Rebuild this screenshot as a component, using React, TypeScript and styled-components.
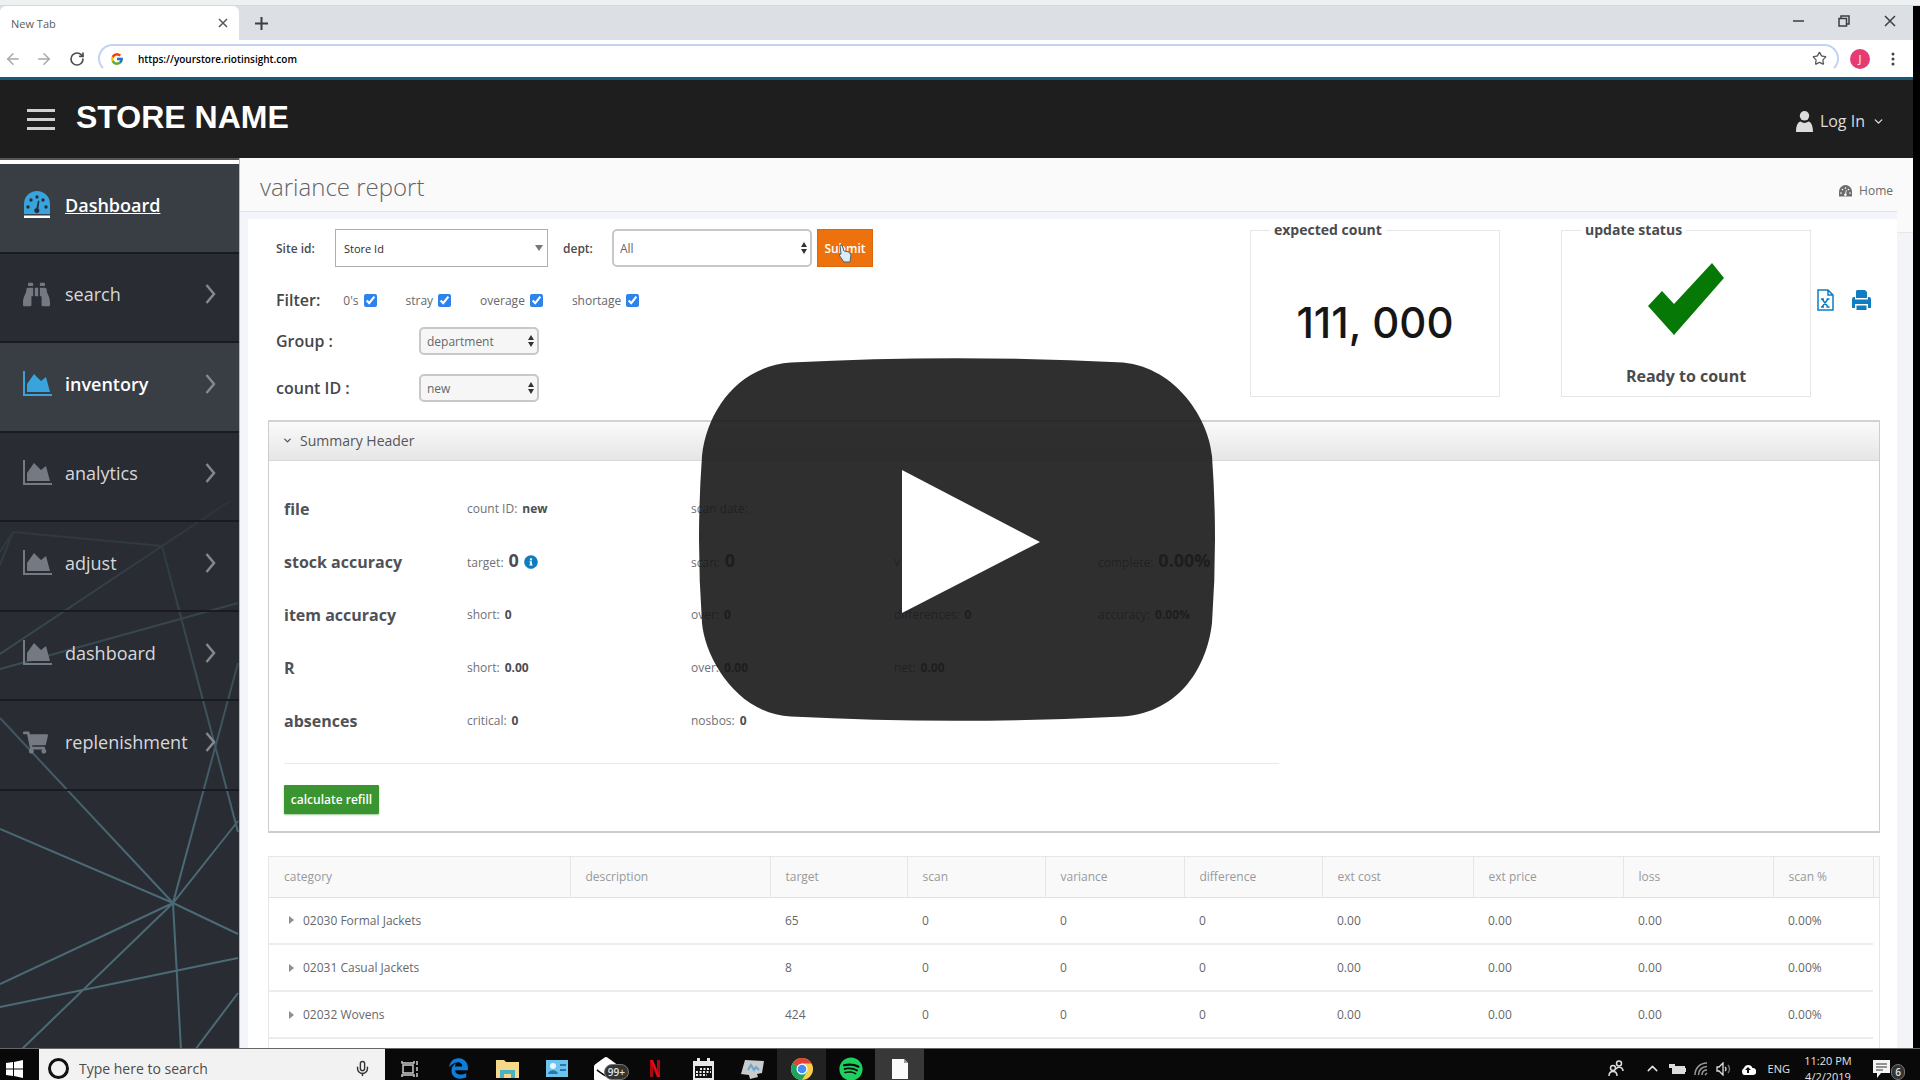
import React from 'react';
import styled, { createGlobalStyle } from 'styled-components';
import {
  FaBinoculars,
  FaShoppingCart,
  FaInfoCircle,
  FaEdgeLegacy,
  FaSpotify,
  FaEnvelopeOpen,
} from 'react-icons/fa';
import { FcGoogle } from 'react-icons/fc';
import { ArrowLeft, ArrowRight, RotateCw, Star, Mic, ChevronUp, ChevronDown } from 'lucide-react';

const GlobalStyle = createGlobalStyle`
  * { box-sizing: border-box; }
  body { margin: 0; background: #000; font-family: 'Open Sans', 'Noto Sans', sans-serif; color: #4a4b4f; }
  button, input, select { font-family: inherit; }
  button { border: 0; padding: 0; background: none; color: inherit; cursor: pointer; }
  svg { display: block; flex: none; }
`;

const Page = styled.div`
  height: 100vh;
  display: flex;
  flex-direction: column;
  overflow: hidden;
`;
const TopEdge = styled.div`
  flex: none;
  height: 6px;
  background: #edf1f1;
  border-bottom: 1px solid #d3dadc;
`;
const Window = styled.div`
  position: relative;
  flex: 1;
  min-height: 0;
  margin-right: 7px;
  display: flex;
  flex-direction: column;
  background: #fff;
`;

/* ---- browser chrome ---- */
const TabStrip = styled.div`
  flex: none;
  height: 34px;
  display: flex;
  align-items: stretch;
  background: #dcdfe4;
`;
const Tab = styled.div`
  width: 239px;
  padding: 0 11px;
  display: flex;
  align-items: center;
  justify-content: space-between;
  background: #fff;
  border-radius: 6px 6px 0 0;
  font-size: 11px;
  color: #5a5c60;
`;
const IconButton = styled.button<{ $w: number }>`
  width: ${(p) => p.$w}px;
  display: flex;
  align-items: center;
  justify-content: center;
  color: #3c3e42;
`;
const WindowButtons = styled.div`
  margin-left: auto;
  display: flex;
  height: 30px;
`;
const AddressRow = styled.div`
  flex: none;
  height: 37px;
  padding-right: 8px;
  display: flex;
  align-items: center;
  background: #fff;
`;
const NavButtons = styled.div`
  width: 98px;
  display: flex;
`;
const AddressBar = styled.label`
  flex: 1;
  height: 29px;
  padding: 0 10px;
  display: flex;
  align-items: center;
  gap: 14px;
  border: 2px solid #c3d3f0;
  border-bottom-color: transparent;
  border-radius: 15px;
`;
const UrlInput = styled.input`
  flex: 1;
  border: 0;
  padding: 0;
  outline: 0;
  background: transparent;
  font-size: 10px;
  font-weight: 600;
  color: #000;
`;
const Avatar = styled.button`
  width: 20px;
  height: 20px;
  margin: 0 11px;
  border-radius: 50%;
  background: #e63a72;
  color: #fff;
  font-size: 11px;
`;

/* ---- site header ---- */
const SiteHeader = styled.header`
  flex: none;
  height: 81px;
  padding: 0 28px 0 27px;
  display: flex;
  align-items: center;
  background: #1e1e1e;
  border-top: 3px solid #17597a;
`;
const Bars = styled.button`
  width: 28px;
  height: 21px;
  display: flex;
  flex-direction: column;
  justify-content: space-between;
  span { display: block; height: 3px; background: #d0d0d0; }
`;
const StoreName = styled.h1`
  margin: 0 auto 4px 21px;
  font: 700 32px/40px 'Liberation Sans', Arial, sans-serif;
  color: #fff;
`;
const Login = styled.button`
  padding-top: 4px;
  display: flex;
  align-items: center;
  gap: 7px;
  color: #dcdcdc;
  font-size: 16px;
  font-weight: 500;
`;

/* ---- body ---- */
const Body = styled.div`
  flex: 1;
  min-height: 0;
  display: flex;
`;
const Sidebar = styled.nav`
  position: relative;
  flex: none;
  width: 240px;
  background: #292c33;
  border-right: 1px solid #b9bcc3;
  overflow: hidden;
`;
const SidebarEdge = styled.div`
  height: 6px;
  background: #fff;
  border-top: 2px solid #555;
`;
const Network = styled.svg`
  position: absolute;
  left: 0;
  top: 322px;
`;
const Menu = styled.ul`
  position: relative;
  margin: 0;
  padding: 0;
  height: 627px;
  display: grid;
  grid-auto-rows: 1fr;
  list-style: none;
`;
const MenuItem = styled.li<{ $active?: boolean }>`
  border-bottom: 2px solid #1a1b20;
  background: ${(p) => (p.$active ? '#383e44' : 'transparent')};
`;
const MenuLink = styled.a<{ $active?: boolean; $underline?: boolean }>`
  height: 100%;
  padding: 0 23px 6px 23px;
  display: grid;
  grid-template-columns: 42px 1fr auto;
  align-items: center;
  font-size: 18px;
  font-weight: ${(p) => (p.$active ? 600 : 400)};
  color: ${(p) => (p.$active ? '#fff' : '#d6d8db')};
  text-decoration: ${(p) => (p.$underline ? 'underline' : 'none')};
  svg { color: ${(p) => (p.$active ? '#38a3dc' : '#757981')}; }
  svg:last-child:not(:first-child) { color: #85888d; }
`;
const Main = styled.main`
  flex: 1;
  min-width: 0;
  display: flex;
  flex-direction: column;
  background: #f3f5fa;
`;
const TitleBar = styled.div`
  flex: none;
  height: 54px;
  padding: 4px 4px 0 20px;
  display: flex;
  align-items: center;
  justify-content: space-between;
  background: #fafafa;
  border-bottom: 1px solid #e2e3e6;
`;
const Title = styled.h2`
  margin: 0;
  font-size: 24px;
  font-weight: 300;
  color: #636468;
`;
const HomeLink = styled.a`
  display: flex;
  align-items: center;
  gap: 7px;
  padding-top: 8px;
  font-size: 12px;
  color: #6a6b6e;
  text-decoration: none;
`;
const Content = styled.div`
  flex: 1;
  min-height: 0;
  margin: 7px 0 0 8px;
  padding: 0 17px 0 20px;
  display: flex;
  flex-direction: column;
  background: #fff;
  overflow: hidden;
`;
const ScrollTrack = styled.div`
  flex: none;
  width: 16px;
  display: flex;
  flex-direction: column;
  background: #f3f4f8;
`;
const ScrollCap = styled.div`
  height: 75px;
  background: #fafafa;
  border-bottom: 1px solid #e6e7ec;
`;

/* ---- filters ---- */
const Controls = styled.section`
  flex: none;
  height: 201px;
  display: flex;
  justify-content: space-between;
`;
const Filters = styled.form`
  padding: 10px 0 0 8px;
`;
const FilterLine = styled.div`
  height: 38px;
  display: flex;
  align-items: center;
`;
const CheckLine = styled.div`
  height: 60px;
  padding-top: 6px;
  display: flex;
  align-items: center;
  gap: 29px;
`;
const PickLine = styled.div`
  height: 28px;
  margin-bottom: 19px;
  display: grid;
  grid-template-columns: 143px 120px;
  align-items: center;
`;
const SmallLabel = styled.label`
  width: 59px;
  font-size: 12px;
  font-weight: 600;
`;
const DeptLabel = styled(SmallLabel)`
  width: 49px;
  margin-left: 15px;
`;
const BigLabel = styled.label`
  font-size: 16px;
  font-weight: 600;
  color: #45464a;
`;
const SelectBox = styled.span<{ $w?: number }>`
  position: relative;
  width: ${(p) => (p.$w ? `${p.$w}px` : '100%')};
  svg { position: absolute; right: 5px; top: 50%; transform: translateY(-50%); pointer-events: none; }
`;
const Select = styled.select<{ $square?: boolean; $small?: boolean }>`
  appearance: none;
  width: 100%;
  height: ${(p) => (p.$small ? 28 : 38)}px;
  padding: 0 ${(p) => (p.$square ? 8 : 6)}px;
  border: ${(p) => (p.$square ? 1 : 2)}px solid ${(p) => (p.$square ? '#aeaeae' : '#c8c8c8')};
  border-radius: ${(p) => (p.$square ? 0 : 5)}px;
  background: ${(p) => (p.$small ? '#f6f6f6' : '#fff')};
  font-size: ${(p) => (p.$square ? 11 : 12)}px;
  color: ${(p) => (p.$square ? '#2c2c2c' : '#66676b')};
  display: block;
`;
const Submit = styled.button`
  position: relative;
  width: 56px;
  height: 38px;
  margin-left: 5px;
  background: #ed720e;
  border: 1px solid #d9690f;
  color: #fff;
  font-size: 12px;
  font-weight: 600;
`;
const Cursor = styled.svg`
  position: absolute;
  left: 20px;
  top: 14px;
`;
const Check = styled.label`
  display: flex;
  align-items: center;
  gap: 5px;
  font-size: 12px;
  color: #66676b;
  input { width: 13px; height: 13px; margin: 0; accent-color: #2f82ea; }
`;
const FilterName = styled.span`
  margin-right: -6px;
  font-size: 16px;
  font-weight: 600;
  color: #45464a;
`;

/* ---- widgets ---- */
const Widgets = styled.div`
  display: flex;
  align-items: flex-start;
`;
const Card = styled.fieldset`
  width: 250px;
  margin: 0 61px 0 0;
  padding: 0 19px;
  border: 1px solid #e6e6e6;
`;
const Legend = styled.legend`
  padding: 0 4px;
  background: #fff;
  font-size: 14px;
  line-height: 22px;
  font-weight: 700;
`;
const CardBody = styled.div<{ $drop: number }>`
  height: 155px;
  padding-top: ${(p) => p.$drop}px;
  display: flex;
  flex-direction: column;
  align-items: center;
  justify-content: center;
`;
const Count = styled.strong`
  font: 500 42px/52px Inter, 'Open Sans', sans-serif;
  color: #161616;
`;
const Ready = styled.strong`
  margin-top: 28px;
  font-size: 16px;
  line-height: 26px;
  font-weight: 700;
`;
const Exports = styled.div`
  display: flex;
  align-items: center;
  gap: 18px;
  margin: 70px 9px 0 -55px;
  color: #0f7ec1;
`;

/* ---- summary ---- */
const Summary = styled.section`
  flex: none;
  border: 1px solid #cdcdcd;
  border-top: 2px solid #d2d2d2;
  border-bottom: 2px solid #cdcdcd;
`;
const SummaryHead = styled.button`
  width: 100%;
  height: 39px;
  padding: 0 0 2px 13px;
  display: flex;
  align-items: center;
  gap: 7px;
  background: linear-gradient(#fafafa, #e6e6e6);
  border-bottom: 1px solid #d9d9d9;
  font-size: 14px;
  color: #55565a;
`;
const SummaryBody = styled.div`
  padding: 21px 15px 17px;
`;
const Line = styled.div`
  height: 53px;
  display: grid;
  grid-template-columns: 183px 224px 203px 204px 1fr;
  align-items: center;
`;
const LineName = styled.h3`
  margin: 0;
  font-size: 16px;
  font-weight: 700;
  color: #505156;
`;
const Stat = styled.span<{ $big?: boolean }>`
  display: flex;
  align-items: baseline;
  gap: 5px;
  font-size: 12px;
  line-height: 20px;
  color: #707175;
  b { color: #4c4d52; font-size: ${(p) => (p.$big ? 18 : 12)}px; }
  svg { color: #0f7ec1; align-self: center; }
`;
const Rule = styled.hr`
  width: 63%;
  margin: 16px 0 21px;
  border: 0;
  border-top: 1px solid #e9e9e9;
`;
const Refill = styled.button`
  width: 95px;
  height: 29px;
  background: #3a9430;
  border-radius: 1px;
  box-shadow: 0 1px 2px #9cc898;
  color: #fff;
  font-size: 12px;
  font-weight: 600;
`;

/* ---- data table ---- */
const TableWrap = styled.div`
  flex: 1;
  min-height: 0;
  margin-top: 23px;
  overflow: hidden;
  border: 1px solid #e6e6e6;
  border-bottom: 0;
`;
const Table = styled.table`
  width: 100%;
  table-layout: fixed;
  border-collapse: collapse;
  font-size: 12px;
`;
const Th = styled.th`
  height: 40px;
  padding: 0 0 0 15px;
  background: #f9f9f9;
  border-right: 1px solid #e6e6e6;
  border-bottom: 1px solid #e2e2e2;
  text-align: left;
  font-weight: 400;
  color: #98999c;
  &:last-child { border-right: 0; padding: 0; }
`;
const Td = styled.td`
  height: 47px;
  padding: 0 0 0 15px;
  border-bottom: 2px solid #ececec;
  color: #66676a;
  &:last-child { border-bottom: 0; padding: 0; }
`;
const Expand = styled.button`
  display: flex;
  align-items: center;
  gap: 9px;
  padding-left: 5px;
  font-size: 12px;
`;

/* ---- video overlay ---- */
const Play = styled.button`
  position: absolute;
  left: 50%;
  top: 352px;
  transform: translateX(-50%);
`;

/* ---- taskbar ---- */
const Taskbar = styled.footer`
  flex: none;
  height: 32px;
  overflow: hidden;
  background: #090909;
  border-top: 1px solid #666;
  color: #e2e2e2;
`;
const TaskRow = styled.div`
  height: 39px;
  display: flex;
  align-items: center;
`;
const Start = styled.button`
  width: 39px;
  padding-left: 6px;
`;
const TaskSearch = styled.label`
  width: 346px;
  height: 39px;
  padding: 0 14px 0 9px;
  display: flex;
  align-items: center;
  gap: 10px;
  background: #f2f2f2;
  color: #333;
  input { flex: 1; min-width: 0; border: 0; padding: 0; background: none; font-size: 14px; }
  input::placeholder { color: #4c4c4c; opacity: 1; }
`;
const Ring = styled.span`
  width: 21px;
  height: 21px;
  border: 3px solid #111;
  border-radius: 50%;
`;
const TaskApp = styled.button<{ $bg?: string }>`
  position: relative;
  width: 49px;
  height: 39px;
  display: flex;
  align-items: center;
  justify-content: center;
  background: ${(p) => p.$bg ?? 'transparent'};
`;
const Badge = styled.span`
  position: absolute;
  right: 1px;
  bottom: 8px;
  padding: 0 3px;
  border: 1px solid #777;
  border-radius: 10px;
  background: #333;
  font-size: 10px;
  font-weight: 600;
  line-height: 14px;
`;
const Tray = styled.div`
  margin-left: auto;
  padding-right: 14px;
  display: flex;
  align-items: center;
  font-size: 11px;
  & > svg { margin-right: 8px; }
  & > svg:first-child { margin-right: 20px; }
  & > svg:last-of-type { margin-right: 12px; }
`;
const Clock = styled.time`
  width: 48px;
  margin: 0 5px 0 14px;
  line-height: 16px;
  text-align: center;
  white-space: nowrap;
`;

const AreaIcon = () => (
  <svg width="29" height="26" viewBox="0 0 29 26" fill="currentColor">
    <path d="M0 0h2v23h27v2H0z" />
    <path d="M4 21V13l7-10 7 7 5-4 4 15z" />
  </svg>
);
const GaugeIcon = ({ small }: { small?: boolean }) => (
  <svg width={small ? 13 : 28} height={small ? 12 : 28} viewBox={small ? '1 0 26 24' : '0 0 28 28'} fill="currentColor">
    <path d="M1 23V13a13 13 0 0 1 26 0v10z" />
    <g fill={small ? '#fafafa' : '#24313a'}>
      <circle cx="5" cy="16" r="1.700" /><circle cx="8" cy="9" r="1.700" /><circle cx="14" cy="6" r="1.700" />
      <circle cx="20" cy="9" r="1.700" /><circle cx="23" cy="16" r="1.700" />
      <path d="M15 9.500l1.400.4-1 7.600a2.600 2.600 0 1 1-2-.5z" />
    </g>
    {!small && <path d="M1 24.500h26v2.500H1z" fill="#fff" />}
  </svg>
);
const ItemArrow = () => (
  <svg width="11" height="20" viewBox="0 0 11 20" fill="none" stroke="currentColor" strokeWidth="2.500">
    <path d="M1.500 1l7.500 9-7.500 9" />
  </svg>
);
const UpDown = () => (
  <svg width="6" height="12" viewBox="0 0 6 12" fill="#333"><path d="M0 5l3-5 3 5zM0 7h6l-3 5z" /></svg>
);
const Person = () => (
  <svg width="17" height="21" viewBox="0 0 18 22" fill="currentColor">
    <circle cx="9" cy="5" r="5" /><path d="M0 22c0-8 3-11 5-11 2 2 6 2 8 0 2 0 5 3 5 11z" />
  </svg>
);

const menu = [
  { label: 'Dashboard', icon: <GaugeIcon />, active: true, underline: true },
  { label: 'search', icon: <FaBinoculars size={27} /> },
  { label: 'inventory', icon: <AreaIcon />, active: true },
  { label: 'analytics', icon: <AreaIcon /> },
  { label: 'adjust', icon: <AreaIcon /> },
  { label: 'dashboard', icon: <AreaIcon /> },
  { label: 'replenishment', icon: <FaShoppingCart size={25} /> },
];

type Cell = { k: string; v?: string; big?: boolean; info?: boolean };
const summary: { name: string; cells: Cell[] }[] = [
  { name: 'file', cells: [{ k: 'count ID:', v: 'new' }, { k: 'scan date:' }] },
  {
    name: 'stock accuracy',
    cells: [
      { k: 'target:', v: '0', big: true, info: true },
      { k: 'scan:', v: '0', big: true },
      { k: 'v' },
      { k: 'complete:', v: '0.00%', big: true },
    ],
  },
  {
    name: 'item accuracy',
    cells: [{ k: 'short:', v: '0' }, { k: 'over:', v: '0' }, { k: 'differences:', v: '0' }, { k: 'accuracy:', v: '0.00%' }],
  },
  { name: 'R', cells: [{ k: 'short:', v: '0.00' }, { k: 'over:', v: '0.00' }, { k: 'net:', v: '0.00' }] },
  { name: 'absences', cells: [{ k: 'critical:', v: '0' }, { k: 'nosbos:', v: '0' }] },
];

const columns: [string, number][] = [
  ['category', 301], ['description', 200], ['target', 137], ['scan', 138], ['variance', 139],
  ['difference', 138], ['ext cost', 151], ['ext price', 150], ['loss', 150], ['scan %', 100],
];
const rows: [string, string][] = [
  ['02030 Formal Jackets', '65'],
  ['02031 Casual Jackets', '8'],
  ['02032 Wovens', '424'],
];

export default function App() {
  return (
    <Page>
      <GlobalStyle />
      <TopEdge />
      <Window>
        <TabStrip>
          <Tab>
            New Tab
            <button aria-label="Close tab">
              <svg width="10" height="10" viewBox="0 0 10 10" stroke="#555" strokeWidth="1.500"><path d="M1 1l8 8M9 1L1 9" /></svg>
            </button>
          </Tab>
          <IconButton $w={44} aria-label="New tab">
            <svg width="13" height="13" viewBox="0 0 13 13" stroke="currentColor" strokeWidth="2"><path d="M6.500 0v13M0 6.500h13" /></svg>
          </IconButton>
          <WindowButtons>
            <IconButton $w={46} aria-label="Minimize">
              <svg width="11" height="12" viewBox="0 0 11 12" stroke="currentColor" strokeWidth="1.500"><path d="M0 6h11" /></svg>
            </IconButton>
            <IconButton $w={46} aria-label="Restore">
              <svg width="12" height="12" viewBox="0 0 12 12" fill="none" stroke="currentColor" strokeWidth="1.500"><path d="M1 3.500h7.500V11H1zM3 3V1h8v8H9" /></svg>
            </IconButton>
            <IconButton $w={46} aria-label="Close">
              <svg width="12" height="12" viewBox="0 0 12 12" stroke="currentColor" strokeWidth="1.500"><path d="M1 1l10 10M11 1L1 11" /></svg>
            </IconButton>
          </WindowButtons>
        </TabStrip>
        <AddressRow>
          <NavButtons>
            <IconButton $w={26} aria-label="Back"><ArrowLeft size={18} color="#a6a8ab" /></IconButton>
            <IconButton $w={36} aria-label="Forward"><ArrowRight size={18} color="#a6a8ab" /></IconButton>
            <IconButton $w={30} aria-label="Reload"><RotateCw size={16} strokeWidth={2.5} color="#4c4e52" /></IconButton>
          </NavButtons>
          <AddressBar>
            <FcGoogle size={14} />
            <UrlInput aria-label="Address" defaultValue="https://yourstore.riotinsight.com" />
            <Star size={15} color="#55575b" />
          </AddressBar>
          <Avatar>J</Avatar>
          <IconButton $w={24} aria-label="Browser menu">
            <svg width="4" height="14" viewBox="0 0 4 14" fill="#444"><circle cx="2" cy="2" r="1.500" /><circle cx="2" cy="7" r="1.500" /><circle cx="2" cy="12" r="1.500" /></svg>
          </IconButton>
        </AddressRow>

        <SiteHeader>
          <Bars aria-label="Toggle menu"><span /><span /><span /></Bars>
          <StoreName>STORE NAME</StoreName>
          <Login><Person /> Log In <ChevronDown size={13} strokeWidth={2.5} /></Login>
        </SiteHeader>

        <Body>
          <Sidebar>
            <SidebarEdge />
            <Network width="240" height="570" viewBox="0 480 240 570" fill="none">
              <defs>
                <linearGradient id="wire" gradientUnits="userSpaceOnUse" x1="0" y1="500" x2="0" y2="860">
                  <stop offset="0" stopColor="#2c3339" /><stop offset="1" stopColor="#4a6a75" />
                </linearGradient>
              </defs>
              <path
                stroke="url(#wire)"
                strokeWidth="2"
                d="M0 552L13 532L0 565M13 532L162 546L230 501M162 546L0 654M162 546L238 832M0 669L238 603M238 663L173 903L0 718M0 829L173 903L238 821M0 984L173 903L21 1050M173 903L181 1050M173 903L238 934M0 1007L238 958M195 1050L238 993"
              />
            </Network>
            <Menu>
              {menu.map((m) => (
                <MenuItem key={m.label} $active={m.active}>
                  <MenuLink href="#" $active={m.active} $underline={m.underline}>
                    {m.icon}
                    {m.label}
                    {!m.underline && <ItemArrow />}
                  </MenuLink>
                </MenuItem>
              ))}
            </Menu>
          </Sidebar>

          <Main>
            <TitleBar>
              <Title>variance report</Title>
              <HomeLink href="#"><GaugeIcon small />Home</HomeLink>
            </TitleBar>
            <Content>
              <Controls>
                <Filters onSubmit={(e) => e.preventDefault()}>
                  <FilterLine>
                    <SmallLabel htmlFor="site">Site id:</SmallLabel>
                    <SelectBox $w={213}>
                      <Select id="site" $square><option>Store Id</option></Select>
                      <svg width="8" height="6" viewBox="0 0 8 6" fill="#777"><path d="M0 0h8L4 6z" /></svg>
                    </SelectBox>
                    <DeptLabel htmlFor="dept">dept:</DeptLabel>
                    <SelectBox $w={200}>
                      <Select id="dept"><option>All</option></Select>
                      <UpDown />
                    </SelectBox>
                    <Submit type="submit">
                      Submit
                      <Cursor width="14" height="19" viewBox="0 0 14 19">
                        <path d="M2 1l2 0 2 6 5 1 2 3-1 7H6L1 11l2-1z" fill="#d8edf5" stroke="#4b6472" />
                      </Cursor>
                    </Submit>
                  </FilterLine>
                  <CheckLine>
                    <FilterName>Filter:</FilterName>
                    {["0's", 'stray', 'overage', 'shortage'].map((f) => (
                      <Check key={f}>{f}<input type="checkbox" defaultChecked /></Check>
                    ))}
                  </CheckLine>
                  <PickLine>
                    <BigLabel htmlFor="group">Group :</BigLabel>
                    <SelectBox><Select id="group" $small><option>department</option></Select><UpDown /></SelectBox>
                  </PickLine>
                  <PickLine>
                    <BigLabel htmlFor="count">count ID :</BigLabel>
                    <SelectBox><Select id="count" $small><option>new</option></Select><UpDown /></SelectBox>
                  </PickLine>
                </Filters>
                <Widgets>
                  <Card>
                    <Legend>expected count</Legend>
                    <CardBody $drop={8}><Count>111, 000</Count></CardBody>
                  </Card>
                  <Card>
                    <Legend>update status</Legend>
                    <CardBody $drop={14}>
                      <svg width="76" height="72" viewBox="0 0 76 72" fill="#067806"><path d="M0 43L14 28L26 41L64 0L76 15L26 72z" /></svg>
                      <Ready>Ready to count</Ready>
                    </CardBody>
                  </Card>
                  <Exports>
                    <button aria-label="Export to Excel">
                      <svg width="17" height="22" viewBox="0 0 17 22" fill="none" stroke="currentColor" strokeWidth="1.500">
                        <path d="M1 1h10l5 5v15H1zM11 1v5h5" />
                        <path d="M5 10l6 8M11 10l-6 8M4 10h3M9.500 10h3M4 18h3M9.500 18h3" />
                      </svg>
                    </button>
                    <button aria-label="Print">
                      <svg width="19" height="21" viewBox="0 0 19 21" fill="currentColor">
                        <path d="M5 0h8l2 2v6H4V1z" />
                        <path d="M2 7h1v2.500h13V7h1a2 2 0 0 1 2 2v9h-3v-4H3v4H0V9a2 2 0 0 1 2-2z" />
                        <path d="M4.500 15.500h10V20h-10z" />
                      </svg>
                    </button>
                  </Exports>
                </Widgets>
              </Controls>

              <Summary>
                <SummaryHead><ChevronDown size={11} strokeWidth={3} />Summary Header</SummaryHead>
                <SummaryBody>
                  {summary.map((r) => (
                    <Line key={r.name}>
                      <LineName>{r.name}</LineName>
                      {r.cells.map((c) => (
                        <Stat key={c.k} $big={c.big}>
                          {c.k}
                          {c.v && <b>{c.v}</b>}
                          {c.info && <FaInfoCircle size={14} />}
                        </Stat>
                      ))}
                    </Line>
                  ))}
                  <Rule />
                  <Refill>calculate refill</Refill>
                </SummaryBody>
              </Summary>

              <TableWrap>
                <Table>
                  <colgroup>
                    {columns.map(([c, w]) => <col key={c} width={w} />)}
                    <col width={6} />
                  </colgroup>
                  <thead>
                    <tr>{columns.map(([c]) => <Th key={c} scope="col">{c}</Th>)}<Th /></tr>
                  </thead>
                  <tbody>
                    {rows.map(([name, target]) => (
                      <tr key={name}>
                        <Td>
                          <Expand>
                            <svg width="5" height="8" viewBox="0 0 5 8" fill="#8d8e91"><path d="M0 0l5 4-5 4z" /></svg>
                            {name}
                          </Expand>
                        </Td>
                        <Td />
                        <Td>{target}</Td>
                        <Td>0</Td><Td>0</Td><Td>0</Td>
                        <Td>0.00</Td><Td>0.00</Td><Td>0.00</Td><Td>0.00%</Td><Td />
                      </tr>
                    ))}
                  </tbody>
                </Table>
              </TableWrap>
            </Content>
          </Main>
          <ScrollTrack><ScrollCap /></ScrollTrack>
        </Body>

        <Play aria-label="Play video">
          <svg width="516" height="363" viewBox="0 0 516 363">
            <path
              fill="#181818"
              fillOpacity="0.900"
              d="M92 4.500Q258-4 424 4.500C478 10 510 62 513 98Q519 181 513 265C508 308 482 354 424 358.500Q258 367 92 358.500C38 356 6 300 3 265Q-3 181 3 98C8 52 40 8 92 4.500z"
            />
            <path fill="#fff" d="M203 112L341 184L203 255z" />
          </svg>
        </Play>
      </Window>

      <Taskbar>
        <TaskRow>
          <Start aria-label="Start">
            <svg width="17" height="18" viewBox="0 0 17 18" fill="#fff"><path d="M0 3l7-1v6.500H0zM8 2l9-2v8.500H8zM0 9.500h7V16l-7-1zM8 9.500h9V18l-9-2z" /></svg>
          </Start>
          <TaskSearch>
            <Ring />
            <input placeholder="Type here to search" aria-label="Type here to search" />
            <Mic size={17} />
          </TaskSearch>
          <TaskApp aria-label="Task view">
            <svg width="18" height="16" viewBox="0 0 18 16" fill="none" stroke="#ccc" strokeWidth="1.500"><path d="M2 4h10v8H2zM1 0v2h12V0M1 16v-2h12v2M16 0v4M16 6v4M16 12v4" /></svg>
          </TaskApp>
          <TaskApp aria-label="Edge"><FaEdgeLegacy size={21} color="#0c7edb" /></TaskApp>
          <TaskApp aria-label="File Explorer">
            <svg width="23" height="19" viewBox="0 0 23 19"><path d="M0 1h8l2 2h13v16H0z" fill="#f5d98a" /><path d="M4 19v-8h15v8h-4v-4H8v4z" fill="#48b3c4" /></svg>
          </TaskApp>
          <TaskApp aria-label="Contacts">
            <svg width="22" height="17" viewBox="0 0 22 17"><path d="M0 0h22v17H0z" fill="#6cc4ec" /><circle cx="7" cy="6" r="3" fill="#e8f7ff" /><path d="M2 14c1-5 9-5 10 0zM14 4h6v2h-6zM14 9h6v2h-6z" fill="#2576b3" /></svg>
          </TaskApp>
          <TaskApp aria-label="Mail"><FaEnvelopeOpen size={24} color="#fff" /><Badge>99+</Badge></TaskApp>
          <TaskApp aria-label="Netflix">
            <svg width="10" height="17" viewBox="0 0 10 17"><path d="M0 0h3v17H0zM7 0h3v17H7z" fill="#a50b12" /><path d="M0 0h3l7 17H7z" fill="#e50914" /></svg>
          </TaskApp>
          <TaskApp aria-label="Calendar">
            <svg width="21" height="22" viewBox="0 0 21 22"><path d="M0 3h21v19H0zM4 0h3v4H4zM14 0h3v4h-3z" fill="#e8e8e8" /><path d="M2 8h17v12H2z" fill="#111" /><path d="M7 11h11M3 14h15M3 17h11" stroke="#eee" strokeWidth="2" strokeDasharray="2 1.500" /></svg>
          </TaskApp>
          <TaskApp aria-label="Monitor">
            <svg width="24" height="20" viewBox="0 0 24 20"><path d="M4 1l19 1-2 12-5 1 1 3-8 2-1-4-8-1z" fill="#c9ccce" /><path d="M7 11l3-5 3 5 2-3 3 3" stroke="#6ba6cc" strokeWidth="2" fill="none" /></svg>
          </TaskApp>
          <TaskApp aria-label="Chrome" $bg="#222">
            <svg width="22" height="22" viewBox="0 0 22 22">
              <circle cx="11" cy="11" r="11" fill="#f8cf45" />
              <path d="M11 11L1.500 5.500A11 11 0 0 1 20.500 5.500H11z" fill="#dc4437" />
              <path d="M1.500 5.500A11 11 0 0 0 11 22l5-8.500L11 11z" fill="#1da462" />
              <circle cx="11" cy="11" r="5.500" fill="#fff" /><circle cx="11" cy="11" r="4.300" fill="#4a8af4" />
            </svg>
          </TaskApp>
          <TaskApp aria-label="Spotify"><FaSpotify size={24} color="#1ed05e" /></TaskApp>
          <TaskApp aria-label="Document" $bg="#383838">
            <svg width="16" height="20" viewBox="0 0 16 20"><path d="M0 0h12l4 4v16H0z" fill="#fafafa" /><path d="M12 0v4h4z" fill="#999" /></svg>
          </TaskApp>
          <Tray>
            <svg width="16" height="17" viewBox="0 0 16 17" fill="none" stroke="#ddd" strokeWidth="1.500"><circle cx="5" cy="8" r="2.500" /><path d="M1 16c0-6 8-6 8 0" /><circle cx="11" cy="3.500" r="2.500" /><path d="M8 9c2-3 7-2 7 2" /></svg>
            <ChevronUp size={17} />
            <svg width="17" height="12" viewBox="0 0 17 12" fill="#ddd"><path d="M3 3h13v8H3zM0 1h6v4H0zM16 5h1v4h-1z" /></svg>
            <svg width="14" height="14" viewBox="0 0 14 14" fill="none" stroke="#999" strokeWidth="1.500"><path d="M1 13C1 6 6 1 13 1M4.500 13c0-5 3.500-8.500 8.500-8.500M8 13c0-3 2-5 5-5" /><path d="M11 13l2-2" /></svg>
            <svg width="16" height="14" viewBox="0 0 16 14" fill="none" stroke="#ddd" strokeWidth="1.300"><path d="M1 5h2l4-4v12L3 9H1zM9 5q2 2 0 4" /><path d="M12 3q3 4 0 8" stroke="#777" /></svg>
            <svg width="16" height="12" viewBox="0 0 16 12"><path d="M4 12a4 4 0 0 1 0-7 4.500 4.500 0 0 1 8.500 0A3.500 3.500 0 0 1 13 12z" fill="#fff" /><path d="M8 4l3 3H9v3H7V7H5z" fill="#111" /></svg>
            ENG
            <Clock>11:20 PM<br />4/2/2019</Clock>
            <TaskApp aria-label="Notifications">
              <svg width="17" height="18" viewBox="0 0 17 18"><path d="M0 0h17v13H8l-4 5v-5H0z" fill="#f4f4f4" /><path d="M3 4h11M3 7h11M3 10h7" stroke="#333" /></svg>
              <Badge>6</Badge>
            </TaskApp>
          </Tray>
        </TaskRow>
      </Taskbar>
    </Page>
  );
}
